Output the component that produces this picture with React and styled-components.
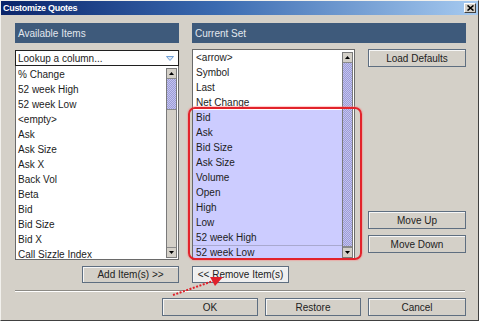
import React from "react";
import styled, { createGlobalStyle } from "styled-components";

const GlobalStyle = createGlobalStyle`
  html, body {
    margin: 0;
    padding: 0;
    background: #d4d0c8;
  }
  body {
    font-family: "Liberation Sans", Arial, sans-serif;
  }
`;

const Window = styled.div`
  position: relative;
  width: 479px;
  height: 321px;
  box-sizing: border-box;
  background: #d4d0c8;
  border: 1px solid #f2f1ed;
  border-right-color: #404040;
  border-bottom-color: #404040;
  display: flex;
  flex-direction: column;
  font-size: 10px;
  color: #1c1c1c;
`;

const TitleBar = styled.div`
  height: 14px;
  display: flex;
  align-items: center;
  justify-content: space-between;
  padding: 0 2px 0 2px;
  background: linear-gradient(90deg, #0a246a 0%, #3a6ab0 45%, #a6caf0 100%);
`;

const Title = styled.span`
  color: #fff;
  font-weight: bold;
  font-size: 9px;
  letter-spacing: -0.3px;
`;

const CloseBox = styled.div`
  width: 10px;
  height: 8px;
  display: flex;
  align-items: center;
  justify-content: center;
  background: #d4d0c8;
  border: 1px solid #fff;
  border-right-color: #404040;
  border-bottom-color: #404040;
`;

const Content = styled.div`
  display: grid;
  grid-template-columns: 164px 163px 98px;
  grid-template-rows: 20px 211px 17px;
  column-gap: 13px;
  row-gap: 6px;
  padding: 8px 0 0 14px;
`;

const Header = styled.div`
  grid-column: ${({ $span }) => $span || "auto"};
  background: #3e5a7b;
  color: #e2e7ee;
  display: flex;
  align-items: center;
  padding-left: 3px;
  font-size: 10px;
`;

const Column = styled.div`
  display: flex;
  flex-direction: column;
  min-height: 0;
`;

const Combo = styled.div`
  height: 16px;
  box-sizing: border-box;
  border: 1px solid #202020;
  background: #fff;
  display: flex;
  align-items: center;
  justify-content: space-between;
  padding: 0 4px 0 2px;
  margin-top: 1px;
`;

const ListBox = styled.div`
  flex: 1;
  min-height: 0;
  display: flex;
  background: #fff;
  border: 1px solid #6a6a6a;
  border-top-width: ${({ $joined }) => ($joined ? "0" : "1px")};
  box-sizing: border-box;
`;

const Items = styled.div`
  flex: 1;
  overflow: hidden;
  padding-top: ${({ $top }) => $top || 0}px;
`;

const Row = styled.div`
  height: 15px;
  line-height: 15px;
  padding-left: ${({ $indent }) => $indent}px;
  white-space: nowrap;
  background: ${({ $selected }) => ($selected ? "#ccccff" : "transparent")};
  box-shadow: ${({ $focused }) =>
    $focused ? "inset 0 1px 0 #a9a9cf" : "none"};
`;

const ScrollBar = styled.div`
  width: 11px;
  margin: ${({ $margin }) => $margin};
  display: flex;
  flex-direction: column;
  border: 1px solid #7a7a7a;
  box-sizing: border-box;
  background: #d4d0c8;
`;

const ArrowButton = styled.div`
  height: 9px;
  flex-shrink: 0;
  display: flex;
  align-items: center;
  justify-content: center;
  background: #d4d0c8;
  border-bottom: ${({ $down }) => ($down ? "none" : "1px solid #8a8a8a")};
  border-top: ${({ $down }) => ($down ? "1px solid #8a8a8a" : "none")};
`;

const Thumb = styled.div`
  height: ${({ $height }) => ($height ? `${$height}px` : "auto")};
  flex: ${({ $height }) => ($height ? "0 0 auto" : "1")};
  background-color: #c4c4f0;
  background-image: linear-gradient(45deg, #9c9cd6 25%, transparent 25%, transparent 75%, #9c9cd6 75%),
    linear-gradient(45deg, #9c9cd6 25%, transparent 25%, transparent 75%, #9c9cd6 75%);
  background-size: 2px 2px;
  background-position: 0 0, 1px 1px;
  border-bottom: 1px solid #8a8a8a;
`;

const Track = styled.div`
  flex: 1;
  background: #d4d0c8;
`;

const Button = styled.button`
  width: ${({ $width }) => $width}px;
  height: ${({ $height }) => $height || 18}px;
  padding: 0;
  font-family: "Liberation Sans", Arial, sans-serif;
  font-size: 10px;
  color: #222;
  background: ${({ $focus }) => ($focus ? "#efefef" : "#d4d0c8")};
  border: 1px solid #5e6e80;
  box-shadow: inset 1px 1px 0 #f6f6f6;
  cursor: pointer;
  flex-shrink: 0;
`;

const SideColumn = styled.div`
  display: flex;
  flex-direction: column;
  gap: 6px;
  padding-bottom: 7px;
`;

const Spacer = styled.div`
  flex: 1;
`;

const ButtonCell = styled.div`
  display: flex;
  justify-content: ${({ $align }) => $align};
`;

const Separator = styled.div`
  margin: 7px 13px 0 14px;
  border-top: 1px solid #8c8a85;
  border-bottom: 1px solid #fff;
`;

const Footer = styled.div`
  display: flex;
  justify-content: flex-end;
  gap: 7px;
  padding: 6px 12px 0 0;
`;

const Highlight = styled.div`
  position: absolute;
  left: 187px;
  top: 106px;
  width: 174px;
  height: 153px;
  box-sizing: border-box;
  border: 2px solid #e2232b;
  border-radius: 7px;
  box-shadow: 0 0 1px 1px rgba(255, 130, 130, 0.45);
  pointer-events: none;
`;

const Pointer = styled.svg`
  position: absolute;
  left: 167px;
  top: 267px;
  pointer-events: none;
`;

const Triangle = ({ down }) => (
  <svg width="5" height="3" viewBox="0 0 5 3">
    <polygon points={down ? "0,0 5,0 2.5,3" : "0,3 5,3 2.5,0"} fill="#000" />
  </svg>
);

const available = [
  "% Change",
  "52 week High",
  "52 week Low",
  "<empty>",
  "Ask",
  "Ask Size",
  "Ask X",
  "Back Vol",
  "Beta",
  "Bid",
  "Bid Size",
  "Bid X",
  "Call Sizzle Index",
];

const current = [
  "<arrow>",
  "Symbol",
  "Last",
  "Net Change",
  "Bid",
  "Ask",
  "Bid Size",
  "Ask Size",
  "Volume",
  "Open",
  "High",
  "Low",
  "52 week High",
  "52 week Low",
];

export default function App() {
  return (
    <>
      <GlobalStyle />
      <Window>
        <TitleBar>
          <Title>Customize Quotes</Title>
          <CloseBox>
            <svg width="7" height="6" viewBox="0 0 7 6">
              <path d="M0.5 0.5 L6.5 5.5 M6.5 0.5 L0.5 5.5" stroke="#000" strokeWidth="1.6" />
            </svg>
          </CloseBox>
        </TitleBar>

        <Content>
          <Header>Available Items</Header>
          <Header $span="2 / 4">Current Set</Header>

          <Column>
            <Combo>
              <span>Lookup a column...</span>
              <svg width="8" height="5" viewBox="0 0 8 5">
                <polygon points="0.5,0.5 7.5,0.5 4,4.5" fill="#dce8f6" stroke="#6f9fd6" strokeWidth="1" />
              </svg>
            </Combo>
            <ListBox $joined>
              <Items $top={1}>
                {available.map((name) => (
                  <Row key={name} $indent={2}>
                    {name}
                  </Row>
                ))}
              </Items>
              <ScrollBar $margin="2px 1px 1px 0">
                <ArrowButton>
                  <Triangle />
                </ArrowButton>
                <Thumb $height={30} />
                <Track />
                <ArrowButton $down>
                  <Triangle down />
                </ArrowButton>
              </ScrollBar>
            </ListBox>
          </Column>

          <Column>
            <ListBox>
              <Items>
                {current.map((name, i) => (
                  <Row
                    key={name}
                    $indent={3}
                    $selected={i >= 4}
                    $focused={i === current.length - 1}
                  >
                    {name}
                  </Row>
                ))}
              </Items>
              <ScrollBar $margin="2px 1px 1px 0">
                <ArrowButton>
                  <Triangle />
                </ArrowButton>
                <Thumb />
                <ArrowButton $down>
                  <Triangle down />
                </ArrowButton>
              </ScrollBar>
            </ListBox>
          </Column>

          <SideColumn>
            <Button $width={98}>Load Defaults</Button>
            <Spacer />
            <Button $width={98}>Move Up</Button>
            <Button $width={98}>Move Down</Button>
          </SideColumn>

          <ButtonCell $align="flex-end">
            <Button $width={97} $height={17}>
              Add Item(s) &gt;&gt;
            </Button>
          </ButtonCell>
          <ButtonCell $align="flex-start">
            <Button $width={97} $height={17} $focus>
              &lt;&lt; Remove Item(s)
            </Button>
          </ButtonCell>
          <div />
        </Content>

        <Separator />

        <Footer>
          <Button $width={96}>OK</Button>
          <Button $width={96}>Restore</Button>
          <Button $width={98}>Cancel</Button>
        </Footer>

        <Highlight />
        <Pointer width="60" height="32" viewBox="0 0 60 32">
          <line
            x1="5"
            y1="27"
            x2="45"
            y2="13"
            stroke="#e0202a"
            strokeWidth="2"
            strokeDasharray="2 1.5"
          />
          <polygon points="55,9 42,9 47,18" fill="#e0202a" />
        </Pointer>
      </Window>
    </>
  );
}
